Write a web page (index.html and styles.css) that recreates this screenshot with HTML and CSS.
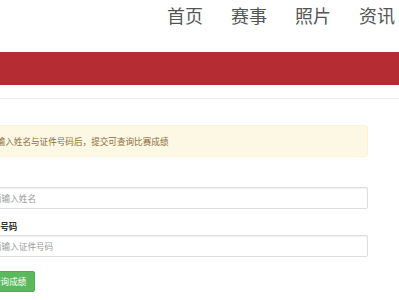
FILE: index.html
```html
<!DOCTYPE html>
<html lang="zh-CN">
<head>
    <meta charset="UTF-8">
    <meta name="viewport" content="width=device-width, initial-scale=1.0">
    <title>成绩查询</title>
    <link rel="stylesheet" href="styles.css">
</head>
<body>
    <header class="topbar">
        <nav class="nav">
            <a href="#">首页</a>
            <a href="#">赛事</a>
            <a href="#">照片</a>
            <a href="#">资讯</a>
        </nav>
    </header>
    <div class="banner"></div>
    <div class="divider"></div>
    <main class="container">
        <div class="alert">请输入姓名与证件号码后，提交可查询比赛成绩</div>
        <form class="query-form">
            <div class="form-group">
                <label for="name">姓名</label>
                <input type="text" id="name" name="name" placeholder="请输入姓名">
            </div>
            <div class="form-group last">
                <label for="idno">证件号码</label>
                <input type="text" id="idno" name="idno" placeholder="请输入证件号码">
            </div>
            <button type="button" class="btn-submit">查询成绩</button>
        </form>
    </main>
</body>
</html>
```

FILE: styles.css
```css
body {
    font-family: "Noto Sans CJK SC", "Noto Sans", sans-serif;
    background-color: #fff;
    margin: 0;
    padding: 0;
    overflow: hidden;
}

.topbar {
    height: 52px;
}

.nav {
    display: flex;
    justify-content: flex-end;
    gap: 28px;
    padding-right: 4px;
    height: 30px;
    line-height: 30px;
}

.nav a {
    font-size: 18px;
    color: #555;
    text-decoration: none;
}

.banner {
    height: 33px;
    background-color: #b52d32;
}

.divider {
    margin-top: 13px;
    height: 1px;
    background-color: #ececec;
    box-shadow: 0 1px 2px rgba(0, 0, 0, 0.04);
}

.container {
    width: 385px;
    margin-left: -17px;
    padding-top: 26px;
}

.alert {
    background-color: #fcf8e3;
    border: 1px solid #faf1d8;
    border-radius: 3px;
    color: #8a6d3b;
    font-size: 8.6px;
    line-height: 12px;
    padding: 9px 10px 9px 4px;
    margin-bottom: 15px;
}

.form-group {
    margin-bottom: 11px;
}

.form-group.last {
    margin-bottom: 9px;
}

.form-group label {
    display: block;
    font-size: 8.6px;
    font-weight: bold;
    color: #333;
    line-height: 13px;
    margin-bottom: 2px;
}

.form-group input {
    display: block;
    width: 100%;
    height: 22px;
    box-sizing: border-box;
    border: 1px solid #ddd;
    border-radius: 2px;
    box-shadow: inset 0 1px 1px rgba(0, 0, 0, 0.05);
    padding: 0 9px;
    font-family: inherit;
    font-size: 8.6px;
    color: #555;
}

.form-group input::placeholder {
    color: #999;
}

.btn-submit {
    height: 21px;
    padding: 0 8px;
    background-color: #5cb85c;
    border: 1px solid #4cae4c;
    border-radius: 2px;
    color: #fff;
    font-family: inherit;
    font-size: 8.6px;
    cursor: pointer;
}
```
